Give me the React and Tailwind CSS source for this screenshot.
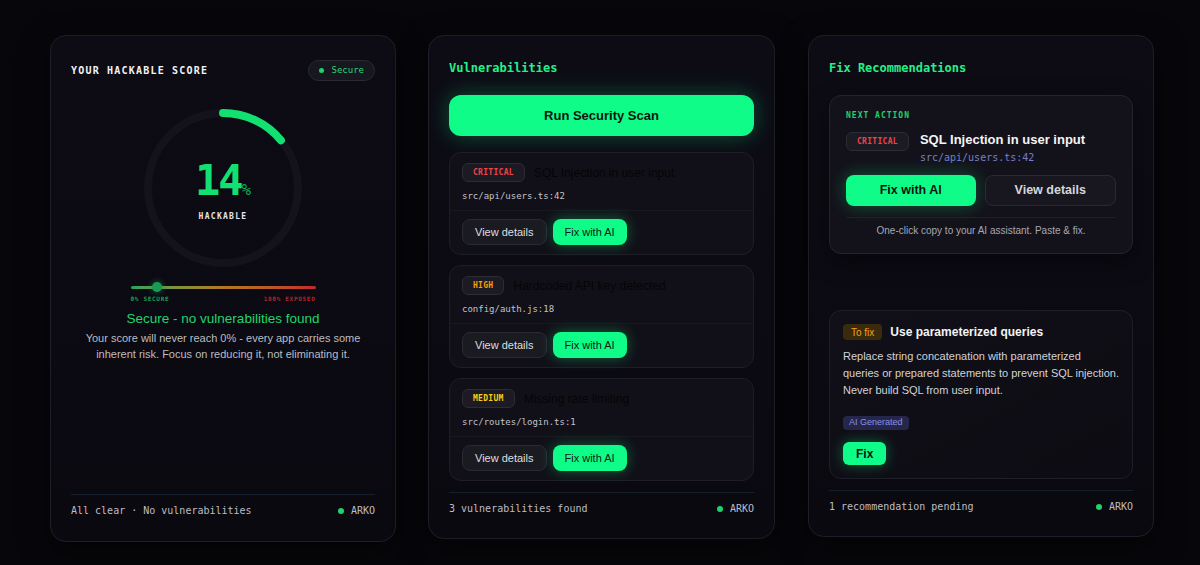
import React from "react";

const MONO = { fontFamily: '"DejaVu Sans Mono", "Liberation Mono", monospace' };
const SANS = { fontFamily: '"Liberation Sans", Arial, sans-serif' };

function CardShell({ children, className = "" }) {
  return (
    <div
      className={`flex flex-col rounded-2xl border border-[#1e1e28] bg-gradient-to-b from-[#0d0c15] to-[#0a0910] px-5 pt-6 shadow-[0_10px_30px_rgba(0,0,0,0.5)] ${className}`}
    >
      {children}
    </div>
  );
}

function Footer({ label, className = "" }) {
  return (
    <div
      className={`mt-auto flex items-center justify-between border-t border-[#16202a] pt-[8px] text-[10px] leading-4 text-[#bdbdc4] ${className}`}
      style={MONO}
    >
      <span>{label}</span>
      <span className="flex items-center gap-[7px]">
        <span className="h-[6px] w-[6px] rounded-full bg-[#1fd26c]" />
        ARKO
      </span>
    </div>
  );
}

function SeverityBadge({ level }) {
  const color = {
    CRITICAL: "text-[#f0434a]",
    HIGH: "text-[#f59e0b]",
    MEDIUM: "text-[#facc15]",
  }[level];
  return (
    <span
      className={`inline-flex h-[19px] shrink-0 items-center rounded-md border border-[#2c2c36] bg-[#1c1b23] px-[10px] text-[8px] font-bold tracking-[0.3px] ${color}`}
      style={MONO}
    >
      {level}
    </span>
  );
}

function Gauge({ value }) {
  const r = 75;
  const c = 2 * Math.PI * r;
  const arc = (value / 100) * c;
  return (
    <div className="relative mx-auto mt-[22px] h-[170px] w-[170px]">
      <svg width="170" height="170" viewBox="0 0 170 170">
        <circle cx="85" cy="85" r={r} fill="none" stroke="#14131c" strokeWidth="8" />
        <circle
          cx="85"
          cy="85"
          r={r}
          fill="none"
          stroke="#12e070"
          strokeWidth="8"
          strokeLinecap="round"
          strokeDasharray={`${arc} ${c}`}
          transform="rotate(-90 85 85)"
        />
      </svg>
      <div className="absolute inset-0 flex flex-col items-center pt-[58px]">
        <div className="flex items-baseline text-[#12e070]" style={MONO}>
          <span className="text-[42px] font-bold leading-[40px] tracking-[-2px]">14</span>
          <span className="text-[16px] font-normal text-[#0fa955]">%</span>
        </div>
        <span
          className="mt-[10px] text-[8px] font-bold leading-[10px] tracking-[1.3px] text-[#e6e6ea]"
          style={MONO}
        >
          HACKABLE
        </span>
      </div>
    </div>
  );
}

function ScoreCard() {
  return (
    <CardShell className="h-[507px] w-[346px]">
      <div className="flex items-center justify-between">
        <span className="text-[10px] font-bold tracking-[0.12em] text-[#f2f2f5]" style={MONO}>
          YOUR HACKABLE SCORE
        </span>
        <span
          className="flex h-[21px] items-center gap-[7px] rounded-full border border-[#2a2a34] bg-[#17171f] px-[10px] text-[9px] text-[#2ed27a]"
          style={MONO}
        >
          <span className="h-[5px] w-[5px] rounded-full bg-[#1fd26c]" />
          Secure
        </span>
      </div>

      <Gauge value={14} />

      <div className="mx-auto mt-[9px] w-[185px]">
        <div className="relative flex h-[10px] items-center">
          <div className="h-[3px] w-full rounded-full bg-gradient-to-r from-[#1aa35a] via-[#b07a1c] to-[#c3262c]" />
          <span className="absolute left-[21px] top-0 h-[10px] w-[10px] rounded-full bg-[#1b9a55] shadow-[0_0_6px_rgba(27,154,85,0.7)]" />
        </div>
        <div
          className="mt-[3px] flex justify-between text-[6px] font-bold leading-[8px] tracking-[0.7px]"
          style={MONO}
        >
          <span className="text-[#1aa35a]">0% SECURE</span>
          <span className="text-[#b2272d]">100% EXPOSED</span>
        </div>
      </div>

      <p className="mt-[7px] text-center text-[13.5px] leading-[18px] text-[#22d46c]" style={SANS}>
        Secure - no vulnerabilities found
      </p>
      <p className="mt-[2px] text-center text-[11px] leading-[16px] text-[#bcbcc2]" style={SANS}>
        Your score will never reach 0% - every app carries some inherent risk. Focus on reducing
        it, not eliminating it.
      </p>

      <Footer label="All clear · No vulnerabilities" className="pb-[22px]" />
    </CardShell>
  );
}

const vulns = [
  { level: "CRITICAL", title: "SQL Injection in user input", path: "src/api/users.ts:42" },
  { level: "HIGH", title: "Hardcoded API key detected", path: "config/auth.js:18" },
  { level: "MEDIUM", title: "Missing rate limiting", path: "src/routes/login.ts:1" },
];

function VulnItem({ v }) {
  return (
    <div className="rounded-xl border border-[#1e1e27] bg-[#111018]">
      <div className="px-3 pt-[10px] pb-[7px]">
        <div className="flex items-center gap-[9px]">
          <SeverityBadge level={v.level} />
          <span className="text-[12px] text-[#050507]" style={SANS}>
            {v.title}
          </span>
        </div>
        <div className="mt-[7px] text-[9px] leading-[14px] text-[#c4c4ca]" style={MONO}>
          {v.path}
        </div>
      </div>
      <div className="flex gap-[6px] border-t border-[#19181f] px-3 pt-[8px] pb-[9px]">
        <button
          className="h-[26px] rounded-lg border border-[#2a2a33] bg-[#1a1a21] px-3 text-[11px] text-[#dedee2]"
          style={SANS}
        >
          View details
        </button>
        <button
          className="h-[26px] rounded-lg bg-[#10fc88] px-3 text-[11px] text-[#0d1a12] shadow-[0_0_14px_rgba(16,252,136,0.35)]"
          style={SANS}
        >
          Fix with AI
        </button>
      </div>
    </div>
  );
}

function VulnCard() {
  return (
    <CardShell className="h-[504px] w-[347px]">
      <h2 className="text-[12px] font-bold leading-4 text-[#24f08a]" style={MONO}>
        Vulnerabilities
      </h2>
      <button
        className="mt-[19px] h-[41px] w-full rounded-xl bg-[#10fc88] text-[13px] font-bold text-[#0b140f] shadow-[0_0_22px_rgba(16,252,136,0.3)]"
        style={SANS}
      >
        Run Security Scan
      </button>
      <div className="mt-4 flex flex-col gap-[10px]">
        {vulns.map((v) => (
          <VulnItem key={v.level} v={v} />
        ))}
      </div>
      <Footer label="3 vulnerabilities found" className="pb-[21px]" />
    </CardShell>
  );
}

function FixCard() {
  return (
    <CardShell className="ml-px h-[502px] w-[346px]">
      <h2 className="text-[12px] font-bold leading-4 text-[#24f08a]" style={MONO}>
        Fix Recommendations
      </h2>

      <div className="mt-[19px] rounded-xl border border-[#25242e] bg-[#13121a] px-4 pt-[15px] pb-[15px] shadow-[0_8px_24px_rgba(0,0,0,0.45)]">
        <div className="text-[8px] font-bold leading-[10px] tracking-[1px] text-[#1fd26c]" style={MONO}>
          NEXT ACTION
        </div>
        <div className="mt-[11px] flex gap-[11px]">
          <SeverityBadge level="CRITICAL" />
          <div className="flex flex-col">
            <span className="text-[13px] font-bold leading-[16px] text-[#f4f4f6]" style={SANS}>
              SQL Injection in user input
            </span>
            <span className="mt-[3px] text-[10px] leading-[14px] text-[#7a7ec6]" style={MONO}>
              src/api/users.ts:42
            </span>
          </div>
        </div>
        <div className="mt-[10px] flex gap-[9px]">
          <button
            className="h-[31px] flex-1 rounded-lg bg-[#10fc88] text-[12.5px] font-bold text-[#0b140f] shadow-[0_0_18px_rgba(16,252,136,0.3)]"
            style={SANS}
          >
            Fix with AI
          </button>
          <button
            className="h-[31px] flex-1 rounded-lg border border-[#2a2a33] bg-[#18171f] text-[12.5px] font-bold text-[#d6d6da]"
            style={SANS}
          >
            View details
          </button>
        </div>
        <div
          className="mt-[11px] border-t border-[#1f1e27] pt-[6px] text-center text-[10px] leading-[14px] text-[#a8a8b0]"
          style={SANS}
        >
          One-click copy to your AI assistant. Paste &amp; fix.
        </div>
      </div>

      <div className="mt-[56px] rounded-xl border border-[#1f1e28] bg-gradient-to-br from-[#111018] to-[#0d0c13] px-[13px] pt-[12px] pb-[13px]">
        <div className="flex items-center gap-2">
          <span
            className="inline-flex h-[16px] items-center rounded bg-[#3a2a0e] px-[8px] text-[10px] text-[#f2a21c]"
            style={SANS}
          >
            To fix
          </span>
          <span className="text-[12px] font-bold text-[#f4f4f6]" style={SANS}>
            Use parameterized queries
          </span>
        </div>
        <p className="mt-[7px] text-[11px] leading-[17px] text-[#d2d2d8]" style={SANS}>
          Replace string concatenation with parameterized queries or prepared statements to prevent
          SQL injection. Never build SQL from user input.
        </p>
        <span
          className="mt-[17px] inline-flex h-[14px] items-center rounded bg-[#25264a] px-[6px] text-[9px] text-[#8c90e6]"
          style={SANS}
        >
          AI Generated
        </span>
        <div>
          <button
            className="mt-[11px] h-[23px] rounded-md bg-[#10fc88] px-[13px] text-[12px] font-bold text-[#0b140f] shadow-[0_0_14px_rgba(16,252,136,0.35)]"
            style={SANS}
          >
            Fix
          </button>
        </div>
      </div>

      <Footer label="1 recommendation pending" className="pb-[21px]" />
    </CardShell>
  );
}

export default function App() {
  return (
    <div className="flex h-[565px] w-[1200px] items-start gap-8 bg-[#07070b] pl-[50px] pt-[35px]">
      <ScoreCard />
      <VulnCard />
      <FixCard />
    </div>
  );
}
